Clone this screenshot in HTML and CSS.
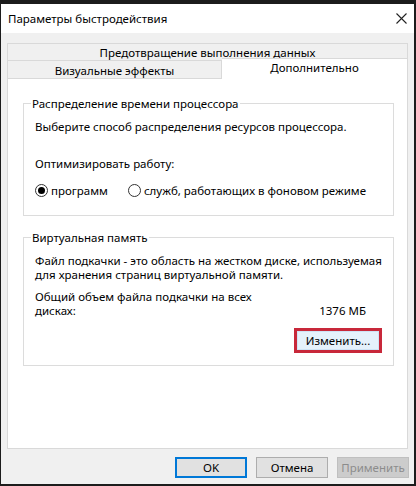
FILE: index.html
```html
<!DOCTYPE html>
<html lang="ru">
<head>
<meta charset="utf-8">
<title>Параметры быстродействия</title>
<link rel="stylesheet" href="styles.css">
</head>
<body>
<div class="window">
  <div class="titlebar">
    <span class="title">Параметры быстродействия</span>
    <svg class="close" width="11" height="11" viewBox="0 0 11 11"><path d="M0.5 0.5 L10.5 10.5 M10.5 0.5 L0.5 10.5" stroke="#222" stroke-width="1.1" fill="none"/></svg>
  </div>
  <div class="content">
    <div class="tabs">
      <div class="tab-row top-row"><div class="tab wide">Предотвращение выполнения данных</div></div>
      <div class="tab-row bottom-row">
        <div class="tab left">Визуальные эффекты</div>
        <div class="tab selected">Дополнительно</div>
      </div>
    </div>
    <div class="panel">
      <fieldset class="group">
        <legend>Распределение времени процессора</legend>
        <div class="group-body">
          <p class="line">Выберите способ распределения ресурсов процессора.</p>
          <p class="line optimize">Оптимизировать работу:</p>
          <div class="radios">
            <label class="radio"><span class="dot checked"></span>программ</label>
            <label class="radio second"><span class="dot"></span>служб, работающих в фоновом режиме</label>
          </div>
        </div>
      </fieldset>
      <fieldset class="group vm">
        <legend>Виртуальная память</legend>
        <div class="group-body">
          <p class="para">Файл подкачки - это область на жестком диске, используемая<br>для хранения страниц виртуальной памяти.</p>
          <div class="total">
            <p class="para2">Общий объем файла подкачки на всех<br>дисках:</p>
            <span class="size">1376 МБ</span>
          </div>
          <div class="change-row">
            <div class="highlight"><button class="btn change">Изменить...</button></div>
          </div>
        </div>
      </fieldset>
    </div>
    <div class="footer">
      <button class="btn ok">OK</button>
      <button class="btn cancel">Отмена</button>
      <button class="btn apply" disabled>Применить</button>
    </div>
  </div>
</div>
</body>
</html>
```
FILE: styles.css
```css
* { box-sizing: border-box; }
html, body { margin: 0; padding: 0; }
body {
  font-family: "Noto Sans", "Open Sans", sans-serif;
  font-size: 11.5px;
  color: #000;
  background: #1a1a1a;
}
.window {
  width: 416px;
  height: 486px;
  border-style: solid;
  border-color: #1c1c1c;
  border-width: 4px 2px 2px 1px;
  background: #f0f0f0;
  display: flex;
  flex-direction: column;
}
.titlebar {
  height: 29px;
  flex: none;
  background: #fff;
  display: flex;
  align-items: center;
  justify-content: space-between;
  padding: 0 7px 0 7px;
}
.title { font-size: 11.5px; }
.close { display: block; }
.content {
  flex: 1;
  display: flex;
  flex-direction: column;
  padding: 10px 6px 6px 6px;
}
.tabs { display: flex; flex-direction: column; }
.tab-row { display: flex; }
.tab {
  border: 1px solid #d9d9d9;
  border-bottom: none;
  background: #f0f0f0;
  text-align: center;
  white-space: nowrap;
}
.top-row .tab { flex: 1; height: 17px; line-height: 17px; }
.bottom-row { height: 18px; align-items: flex-end; }
.tab.left { width: 215px; height: 18px; line-height: 19px; }
.tab.selected {
  flex: 1;
  height: 21px;
  margin-top: -2px;
  margin-bottom: -1px;
  line-height: 17px;
  background: #fff;
  border-left: none;
  position: relative;
  z-index: 1;
}
.panel {
  flex: 1;
  background: #fff;
  border: 1px solid #d9d9d9;
  padding: 17px 13px 0 15px;
}
.group {
  margin: 0;
  padding: 0;
  border: 1px solid #dcdcdc;
  min-width: 0;
}
.group legend {
  margin-left: 7px;
  padding: 0 1px;
  line-height: 15px;
}
.group-body { padding: 8px 10px 17px 11px; }
.line { margin: 0; line-height: 15px; white-space: nowrap; }
.optimize { margin-top: 22px; }
.radios { display: flex; margin-top: 12px; line-height: 15px; }
.radio { display: flex; align-items: center; white-space: nowrap; }
.radio.second { margin-left: 20px; }
.dot {
  width: 13px;
  height: 13px;
  border: 1px solid #333;
  border-radius: 50%;
  margin-right: 3px;
  display: inline-flex;
  align-items: center;
  justify-content: center;
  background: #fff;
}
.dot.checked::after {
  content: "";
  width: 7px;
  height: 7px;
  border-radius: 50%;
  background: #000;
}
.vm { margin-top: 14px; }
.vm .group-body { padding: 9px 10px 12px 11px; }
.para { margin: 0; line-height: 14px; white-space: nowrap; }
.total {
  display: flex;
  justify-content: space-between;
  align-items: flex-end;
  margin-top: 8px;
  padding-right: 17px;
}
.para2 { margin: 0; line-height: 14px; white-space: nowrap; }
.size { line-height: 14px; }
.change-row {
  display: flex;
  justify-content: flex-end;
  margin-top: 10px;
  padding-right: 1px;
}
.highlight {
  border: 3px solid #c8283a;
  width: 88px;
  height: 25px;
}
.btn {
  font-family: inherit;
  font-size: 11.5px;
  color: #000;
  margin: 0;
  padding: 0;
  background: #e1e1e1;
  border: 1px solid #adadad;
  border-radius: 0;
}
.change {
  width: 100%;
  height: 100%;
  background: #e5f1fb;
  border: 1px solid #cfe3f5;
}
.footer {
  display: flex;
  justify-content: flex-end;
  gap: 9px;
  margin-top: 8px;
  margin-right: -1px;
}
.footer .btn { width: 72px; height: 21px; }
.ok { border: 2px solid #0078d7; }
.apply { background: #cccccc; border-color: #bfbfbf; color: #8c8c8c; }
```
